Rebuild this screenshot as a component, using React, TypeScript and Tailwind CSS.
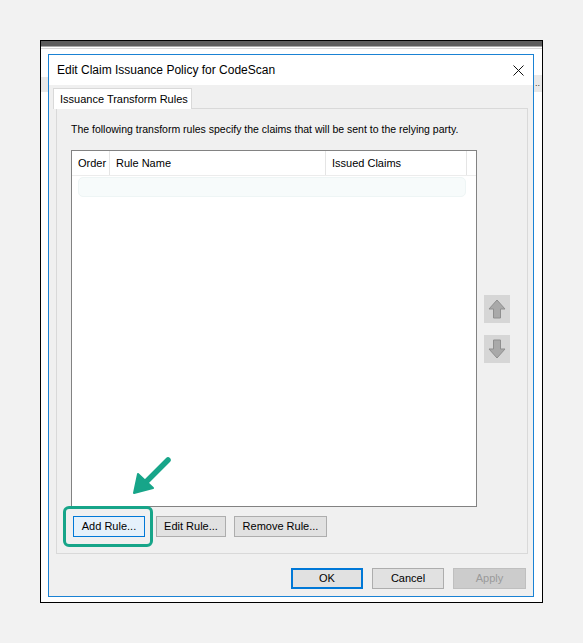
import React from "react";

const font = "font-['Liberation_Sans',Arial,sans-serif]";

const UpArrow = () => (
  <svg width="20" height="22" viewBox="0 0 20 22">
    <path d="M10 2 L18 11 L13.5 11 L13.5 20 L6.5 20 L6.5 11 L2 11 Z" fill="#a9a9a9" stroke="#8f8f8f" strokeWidth="1" />
  </svg>
);

const DownArrow = () => (
  <svg width="20" height="22" viewBox="0 0 20 22">
    <path d="M10 20 L18 11 L13.5 11 L13.5 2 L6.5 2 L6.5 11 L2 11 Z" fill="#a9a9a9" stroke="#8f8f8f" strokeWidth="1" />
  </svg>
);

const GreenArrow = () => (
  <svg width="44" height="44" viewBox="0 0 44 44" className="absolute left-[58px] top-[-60px]">
    <line x1="37" y1="4" x2="14" y2="27" stroke="#17a589" strokeWidth="5.5" strokeLinecap="round" />
    <path d="M3 37 L7 18 L22 32 Z" fill="#17a589" stroke="#17a589" strokeWidth="2" strokeLinejoin="round" />
  </svg>
);

const Button = ({label, className}: {label: string; className: string}) => (
  <div className={`flex items-center justify-center h-[21px] text-[11px] ${className}`}>{label}</div>
);

const RuleList = () => (
  <div className="w-[406px] h-[357px] border border-[#828282] bg-white flex flex-col">
    {/* header */}
    <div className="flex h-[25px] border-b border-[#ececec] text-[11px] text-black">
      <div className="w-[38px] border-r border-[#e5e5e5] pl-[6px] flex items-center">Order</div>
      <div className="w-[216px] border-r border-[#e5e5e5] pl-[6px] flex items-center">Rule Name</div>
      <div className="w-[141px] border-r border-[#e5e5e5] pl-[6px] flex items-center">Issued Claims</div>
    </div>
    <div className="ml-[6px] mt-[1px] w-[388px] h-[20px] rounded-[5px] bg-[#f7fbfb] border border-[#eef5f5]" />
  </div>
);

export default function App() {
  return (
    <div className={`w-[583px] h-[643px] bg-[#f2f2f2] pt-[40px] pl-[40px] ${font}`}>
      <div className="w-[503px] h-[563px] border border-black bg-white flex flex-col">
        {/* background window top */}
        <div className="h-[5px] bg-[#5c5c5c]" />
        <div className="h-px bg-[#a8a8a8]" />
        <div className="h-px bg-white" />
        <div className="h-px bg-[#d6d6d6]" />
        <div className="flex mt-[5px]">
          <div className="w-[7px]">
            <div className="mt-[23px] h-[15px] bg-[#e8e8e8]" />
          </div>
          {/* dialog */}
          <div className="w-[486px] h-[543px] border border-[#1a82d4] flex flex-col">
            <div className="h-[30px] bg-white flex items-center justify-between pl-[8px] pr-[9px]">
              <span className="text-[12px] text-black">Edit Claim Issuance Policy for CodeScan</span>
              <svg width="11" height="11" viewBox="0 0 11 11">
                <path d="M0.5 0.5 L10.5 10.5 M10.5 0.5 L0.5 10.5" stroke="#111" strokeWidth="1" />
              </svg>
            </div>
            <div className="flex-1 bg-[#f0f0f0] flex flex-col pl-[4px] pt-[3px]">
              <div className="relative z-10 -mb-px w-[139px] h-[21px] bg-white border border-b-0 border-[#d9d9d9] flex items-center pl-[6px] text-[11px]">
                Issuance Transform Rules
              </div>
              <div className="ml-[3px] w-[472px] h-[446px] border border-[#d9d9d9] bg-[#f0f0f0] pl-[14px] pt-[14px] flex flex-col">
                <div className="h-[12px] leading-[12px] text-[10.5px] text-black">
                  The following transform rules specify the claims that will be sent to the relying party.
                </div>
                <div className="flex mt-[15px]">
                  <RuleList />
                  <div className="ml-[7px] flex flex-col">
                    <div className="mt-[145px] w-[26px] h-[28px] bg-[#d6d6d6] flex items-center justify-center">
                      <UpArrow />
                    </div>
                    <div className="mt-[12px] w-[26px] h-[28px] bg-[#d6d6d6] flex items-center justify-center">
                      <DownArrow />
                    </div>
                  </div>
                </div>
                <div className="flex mt-[9px] ml-[2px]">
                  <div className="relative">
                    <Button label="Add Rule..." className="w-[72px] bg-[#e5f1fb] border border-[#0078d7]" />
                    <div className="absolute left-[-10px] top-[-10px] w-[90px] h-[41px] rounded-[6px] border-[3px] border-[#17a589]" />
                    <GreenArrow />
                  </div>
                  <Button label="Edit Rule..." className="ml-[11px] w-[70px] bg-[#e1e1e1] border border-[#adadad]" />
                  <Button label="Remove Rule..." className="ml-[8px] w-[93px] bg-[#e1e1e1] border border-[#adadad]" />
                </div>
              </div>
              <div className="flex mt-[14px] pl-[238px]">
                <Button label="OK" className="w-[72px] bg-[#e1e1e1] border-2 border-[#0078d7]" />
                <Button label="Cancel" className="ml-[9px] w-[72px] bg-[#e1e1e1] border border-[#adadad]" />
                <Button label="Apply" className="ml-[9px] w-[73px] bg-[#cccccc] border border-[#bfbfbf] text-[#9a9a9a]" />
              </div>
            </div>
          </div>
          <div className="w-[8px]">
            <div className="mt-[21px] h-[17px] bg-[#e8e8e8] flex items-center text-[9px] leading-none text-[#333] pl-px">..</div>
          </div>
        </div>
      </div>
    </div>
  );
}
